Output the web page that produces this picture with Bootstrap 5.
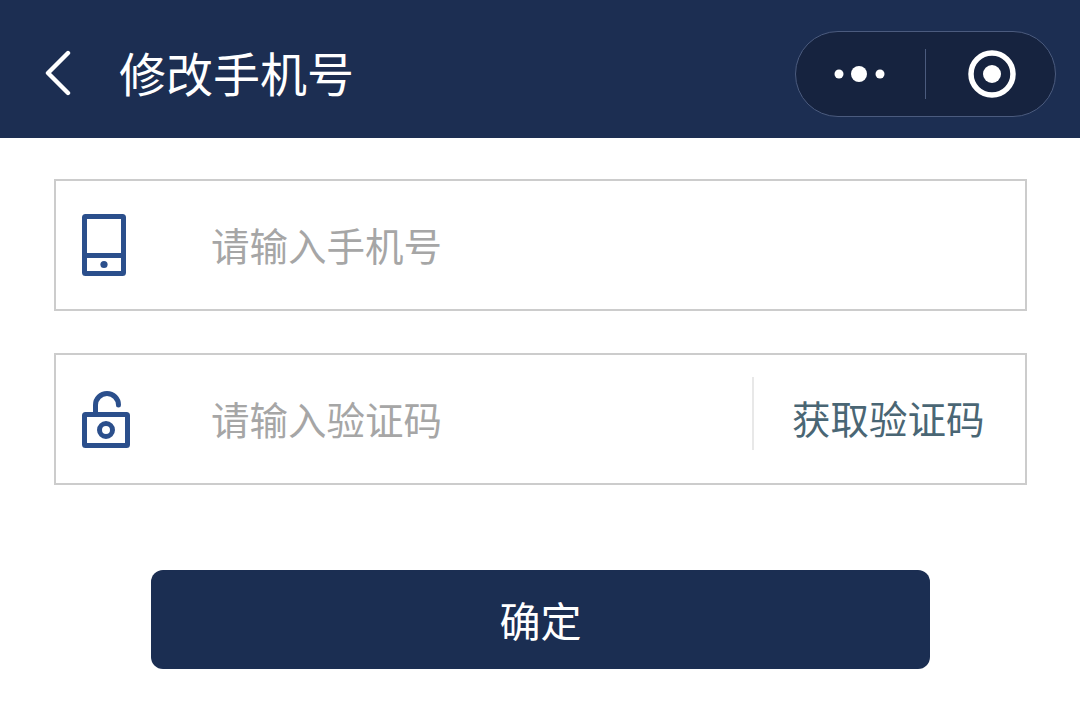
<!DOCTYPE html>
<html lang="zh-CN">
<head>
    <meta charset="UTF-8">
    <meta name="viewport" content="width=device-width, initial-scale=1.0">
    <title>修改手机号</title>
    <link href="https://cdn.jsdelivr.net/npm/bootstrap@5.3.0/dist/css/bootstrap.min.css" rel="stylesheet">
    <style>
        body {
            font-family: "Noto Sans CJK SC", "Liberation Sans", sans-serif;
            background-color: #fff;
        }
        .top-bar {
            height: 138px;
            background-color: #1c2e52;
            padding: 8px 24px 0 45px;
        }
        .back-link { width: 74px; line-height: 0; }
        .page-title {
            font-size: 47px;
            font-weight: 400;
            line-height: 1;
            color: #fff;
            margin: -4px 0 0;
        }
        .capsule {
            width: 261px;
            height: 86px;
            margin-top: 1px;
            background-color: #16233f;
            border: 1px solid #4b5b7e;
            border-radius: 43px;
        }
        .capsule-side { width: 130px; line-height: 0; }
        .capsule-side-end { padding-left: 4px; }
        .capsule-rule { width: 1px; height: 50px; background-color: #4b5b7e; }
        .form-area { padding: 41px 53px 0 54px; }
        .field-box {
            height: 132px;
            border: 2px solid #ccc;
            margin-bottom: 42px;
        }
        .field-icon { width: 155px; padding-left: 26px; line-height: 0; }
        .field-input {
            border: 0;
            border-radius: 0;
            padding: 0;
            font-size: 38.5px;
            color: #333;
            background: transparent;
        }
        .field-input::placeholder { color: #a6a6a6; opacity: 1; }
        .field-input:focus { box-shadow: none; }
        .code-action {
            width: 273px;
            height: 73px;
            margin-top: -12px;
            padding-left: 38px;
            border-left: 2px solid #e8e8e8;
            font-size: 38.5px;
            line-height: 81px;
            color: #4a6674;
            white-space: nowrap;
        }
        .submit-wrap { padding: 43px 97px 0; }
        .submit-btn {
            height: 99px;
            font-size: 41px;
            line-height: 1;
            color: #fff;
            background-color: #1b2e52;
            border: 0;
            border-radius: 12px;
        }
        .submit-btn:hover { color: #fff; background-color: #1b2e52; }
    </style>
</head>
<body>
    <header class="top-bar d-flex align-items-center">
        <a href="#" class="back-link flex-shrink-0" aria-label="返回">
            <svg width="26" height="46" viewBox="0 0 26 46" fill="none" stroke="#fff" stroke-width="4.4" stroke-linecap="round" stroke-linejoin="round"><path d="M23 3 3 23l20 20"/></svg>
        </a>
        <h1 class="page-title flex-grow-1">修改手机号</h1>
        <div class="capsule d-flex align-items-center">
            <div class="capsule-side d-flex justify-content-center align-items-center">
                <svg width="52" height="18" viewBox="0 0 52 18" fill="#fff"><circle cx="5" cy="9" r="4.500"/><circle cx="25" cy="9" r="8"/><circle cx="46" cy="9" r="4.500"/></svg>
            </div>
            <div class="capsule-rule"></div>
            <div class="capsule-side capsule-side-end d-flex justify-content-center align-items-center">
                <svg width="48" height="48" viewBox="0 0 48 48"><circle cx="24" cy="24" r="21" fill="none" stroke="#fff" stroke-width="5.500"/><circle cx="24" cy="24" r="9" fill="#fff"/></svg>
            </div>
        </div>
    </header>

    <main>
        <form class="form-area">
            <div class="field-box d-flex align-items-center">
                <div class="field-icon flex-shrink-0">
                    <svg width="44" height="62" viewBox="0 0 44 62" fill="none" stroke="#2b4f8c" stroke-width="5"><rect x="2.500" y="2.500" width="39" height="57" rx="1"/><path d="M2.500 41.500h39"/><circle cx="22" cy="50.500" r="3.600" fill="#2b4f8c" stroke="none"/></svg>
                </div>
                <input type="tel" class="form-control field-input" placeholder="请输入手机号">
            </div>
            <div class="field-box d-flex align-items-center">
                <div class="field-icon flex-shrink-0">
                    <svg width="49" height="57" viewBox="0 0 49 57" fill="none" stroke="#2b4f8c" stroke-width="5" stroke-linecap="round"><path d="M13.500 21V14a11.500 11.500 0 0 1 23 0"/><rect x="2.500" y="23.500" width="43" height="31" rx="1"/><circle cx="24" cy="39" r="6.500"/></svg>
                </div>
                <input type="text" class="form-control field-input" placeholder="请输入验证码">
                <div class="code-action flex-shrink-0">获取验证码</div>
            </div>
            <div class="submit-wrap">
                <button type="button" class="btn submit-btn w-100">确定</button>
            </div>
        </form>
    </main>

    <script src="https://cdn.jsdelivr.net/npm/bootstrap@5.3.0/dist/js/bootstrap.bundle.min.js"></script>
</body>
</html>
